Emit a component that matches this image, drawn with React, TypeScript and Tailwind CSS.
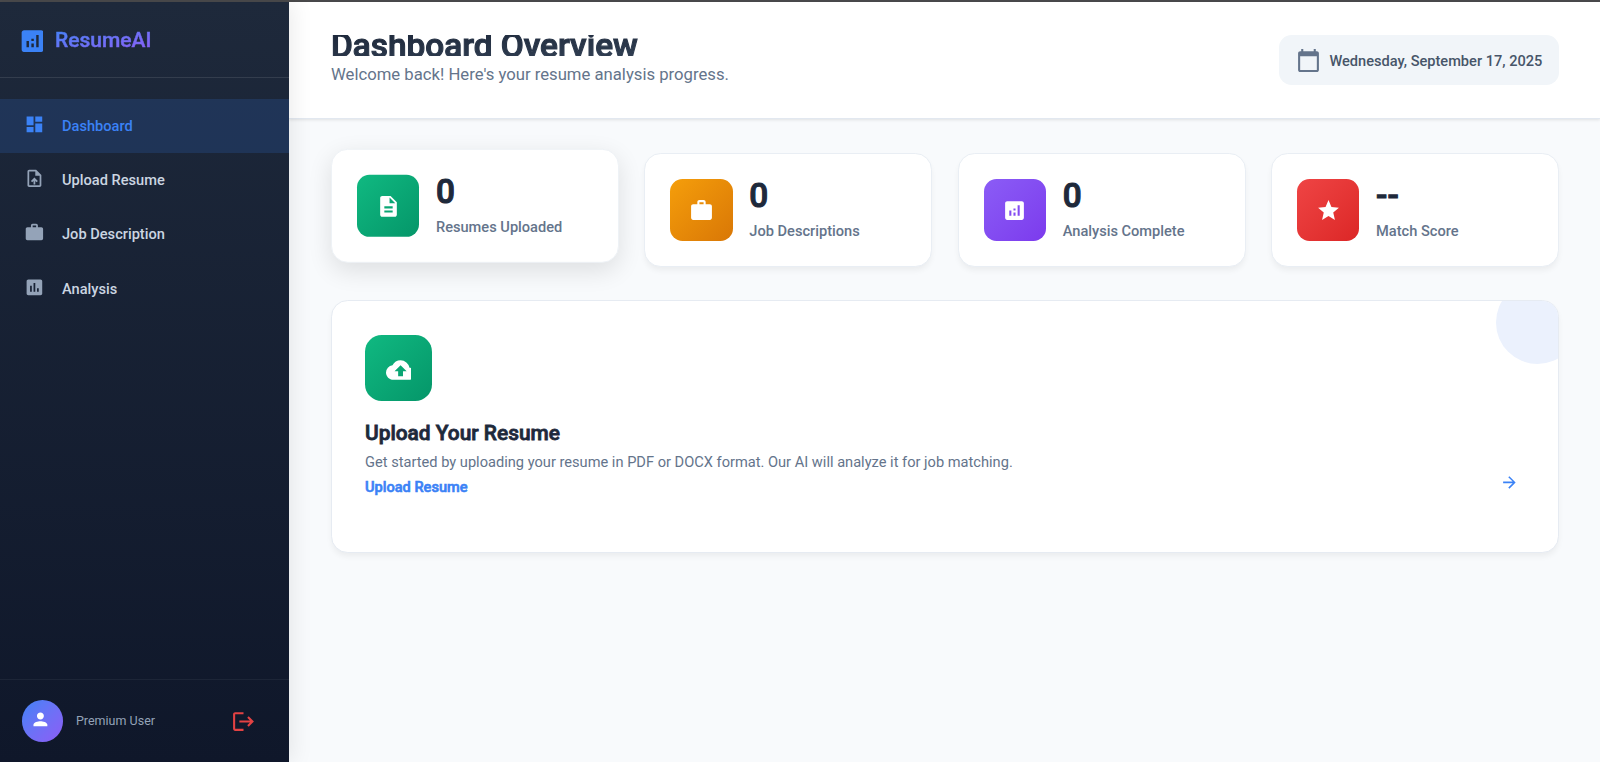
import React from "react";
import type { IconType } from "react-icons";
import {
  MdAnalytics,
  MdArrowForward,
  MdAssessment,
  MdCalendarToday,
  MdCloudUpload,
  MdDashboard,
  MdDescription,
  MdLogout,
  MdPerson,
  MdStar,
  MdUploadFile,
  MdWork,
} from "react-icons/md";

type NavItem = { label: string; icon: IconType; active?: boolean };

const navItems: NavItem[] = [
  { label: "Dashboard", icon: MdDashboard, active: true },
  { label: "Upload Resume", icon: MdUploadFile },
  { label: "Job Description", icon: MdWork },
  { label: "Analysis", icon: MdAssessment },
];

type Stat = { value: string; label: string; icon: IconType; tile: string; raised?: boolean };

const stats: Stat[] = [
  { value: "0", label: "Resumes Uploaded", icon: MdDescription, tile: "from-[#10b981] to-[#059669]", raised: true },
  { value: "0", label: "Job Descriptions", icon: MdWork, tile: "from-[#f59e0b] to-[#d97706]" },
  { value: "0", label: "Analysis Complete", icon: MdAnalytics, tile: "from-[#8b5cf6] to-[#7c3aed]" },
  { value: "--", label: "Match Score", icon: MdStar, tile: "from-[#ef4444] to-[#dc2626]" },
];

function Sidebar() {
  return (
    <aside className="z-10 flex w-[289px] shrink-0 flex-col bg-linear-to-b from-[#1e293b] to-[#0f172a] shadow-[4px_0_20px_rgba(0,0,0,0.08)]">
      <div className="flex h-[76px] shrink-0 items-center border-b border-white/10 pl-[17.6px]">
        <div className="size-[25.4px] overflow-hidden text-[#3b82f6]">
          <MdAnalytics className="size-[29.17px] max-w-none -translate-y-[0.5px]" />
        </div>
        <span className="mt-px ml-[12px] bg-linear-to-br from-[#3b82f6] to-[#8b5cf6] bg-clip-text text-[21px] leading-[25px] font-medium text-transparent [-webkit-text-stroke:0.5px_transparent]">
          ResumeAI
        </span>
      </div>
      <nav className="flex flex-1 flex-col pt-[20.5px]">
        {navItems.map(({ label, icon: Icon, active }) => (
          <a
            key={label}
            className={
              active
                ? "flex h-[54.3px] items-center gap-[13px] bg-[#3b82f6]/16 pl-[24px] text-[#3b82f6]"
                : "flex h-[54.3px] items-center gap-[13px] pl-[24px] text-[#cbd5e1]"
            }
          >
            <span className={active ? "size-[25px] pt-[0.6px]" : "size-[25px] pt-[0.6px] text-[#94a3b8]"}>
              <Icon className="size-[20.83px]" />
            </span>
            <span className="text-[14.62px] leading-5 font-medium">{label}</span>
          </a>
        ))}
      </nav>
      <div className="flex h-[83px] shrink-0 items-center border-t border-white/5 pr-[33.4px] pl-[21.8px]">
        <div className="flex size-[41.7px] items-center justify-center rounded-full bg-linear-to-br from-[#3b82f6] to-[#8b5cf6]">
          <span className="size-[25px] text-white">
            <MdPerson className="size-[20.83px]" />
          </span>
        </div>
        <span className="mt-px ml-[12.5px] flex-1 text-[12.5px] text-[#94a3b8]">Premium User</span>
        <MdLogout className="size-[25px] text-[#ef4444]/95" />
      </div>
    </aside>
  );
}

function PageHeader() {
  return (
    <header className="flex h-[117px] shrink-0 items-start justify-between border-b border-[#e2e8f0] bg-white pt-[33px] pr-[41px] pl-[42px] shadow-[0_1px_3px_rgba(0,0,0,0.1)]">
      <div>
        <h1 className="h-[21px] bg-linear-to-br from-[#1e293b] to-[#334155] bg-clip-text text-[33.38px] leading-[22px] font-medium text-transparent [-webkit-text-stroke:1.1px_transparent]">
          Dashboard Overview
        </h1>
        <p className="mt-[6px] text-[16.7px] leading-[25px] text-[#64748b]">
          Welcome back! Here's your resume analysis progress.
        </p>
      </div>
      <div className="flex h-[50px] items-center gap-[8.3px] rounded-[12.5px] bg-[#f1f5f9] px-[16.67px]">
        <MdCalendarToday className="size-[25px] text-[#64748b]" />
        <span className="mt-[3px] text-[14.6px] font-medium text-[#475569]">Wednesday, September 17, 2025</span>
      </div>
    </header>
  );
}

function StatCard({ value, label, icon: Icon, tile, raised }: Stat) {
  return (
    <div
      className={
        raised
          ? "flex h-[114px] -translate-y-[4.2px] items-center gap-[16.67px] rounded-[16.67px] border border-[#eef2f6] bg-white px-[24.8px] shadow-[0_8px_25px_rgba(0,0,0,0.11)]"
          : "flex h-[114px] items-center gap-[16.67px] rounded-[16.67px] border border-[#e9eef4] bg-white px-[24.8px] shadow-[0_4px_6px_-1px_rgba(0,0,0,0.06)]"
      }
    >
      <div className={`flex size-[62.5px] items-center justify-center rounded-[12.5px] bg-linear-to-br text-white ${tile}`}>
        <Icon className="size-[25px]" />
      </div>
      <div className="pt-px">
        <div className="text-[33.33px] leading-[33.33px] font-medium text-[#1e293b] [-webkit-text-stroke:1.1px]">{value}</div>
        <div className="mt-[8px] text-[14.62px] leading-[22px] font-medium text-[#64748b]">{label}</div>
      </div>
    </div>
  );
}

function UploadCard() {
  return (
    <section className="relative mt-[33px] h-[253px] overflow-hidden rounded-[16.67px] border border-[#e6ebf2] bg-white px-[33px] pt-[33.5px] shadow-[0_4px_6px_-1px_rgba(0,0,0,0.06)]">
      <div className="absolute -top-[20.5px] -right-[20.8px] size-[83.3px] rounded-full bg-[#ebf1fd]" />
      <div className="flex size-[66.7px] items-center justify-center rounded-[16.67px] bg-linear-to-br from-[#10b981] to-[#059669] text-white">
        <span className="size-[25px] overflow-hidden">
          <MdCloudUpload className="size-[29.17px] max-w-none translate-y-[0.5px]" />
        </span>
      </div>
      <div className="flex items-end justify-between">
        <div>
          <h2 className="mt-[19px] text-[20.88px] leading-[26px] font-medium text-[#1e293b] [-webkit-text-stroke:0.8px]">
            Upload Your Resume
          </h2>
          <p className="mt-[5px] text-[14.63px] leading-[23px] text-[#64748b]">
            Get started by uploading your resume in PDF or DOCX format. Our AI will analyze it for job matching.
          </p>
          <a className="mt-[2px] block text-[14.58px] leading-[22px] font-medium text-[#3b82f6] [-webkit-text-stroke:0.6px]">
            Upload Resume
          </a>
        </div>
        <span className="mb-[0.5px] size-[25px] text-[#3b82f6]">
          <MdArrowForward className="size-[18.75px]" />
        </span>
      </div>
    </section>
  );
}

export default function App() {
  return (
    <div className="flex h-[762px] w-[1600px] flex-col overflow-hidden font-['Roboto',sans-serif]">
      <div className="h-[2px] shrink-0 bg-[#4a4a4c]" />
      <div className="flex min-h-0 flex-1">
        <Sidebar />
        <main className="flex flex-1 flex-col bg-[#f8fafc]">
          <PageHeader />
          <div className="pt-[34px] pr-[41px] pl-[42px]">
            <div className="grid grid-cols-4 gap-[25.5px]">
              {stats.map((stat) => (
                <StatCard key={stat.label} {...stat} />
              ))}
            </div>
            <UploadCard />
          </div>
        </main>
      </div>
    </div>
  );
}
